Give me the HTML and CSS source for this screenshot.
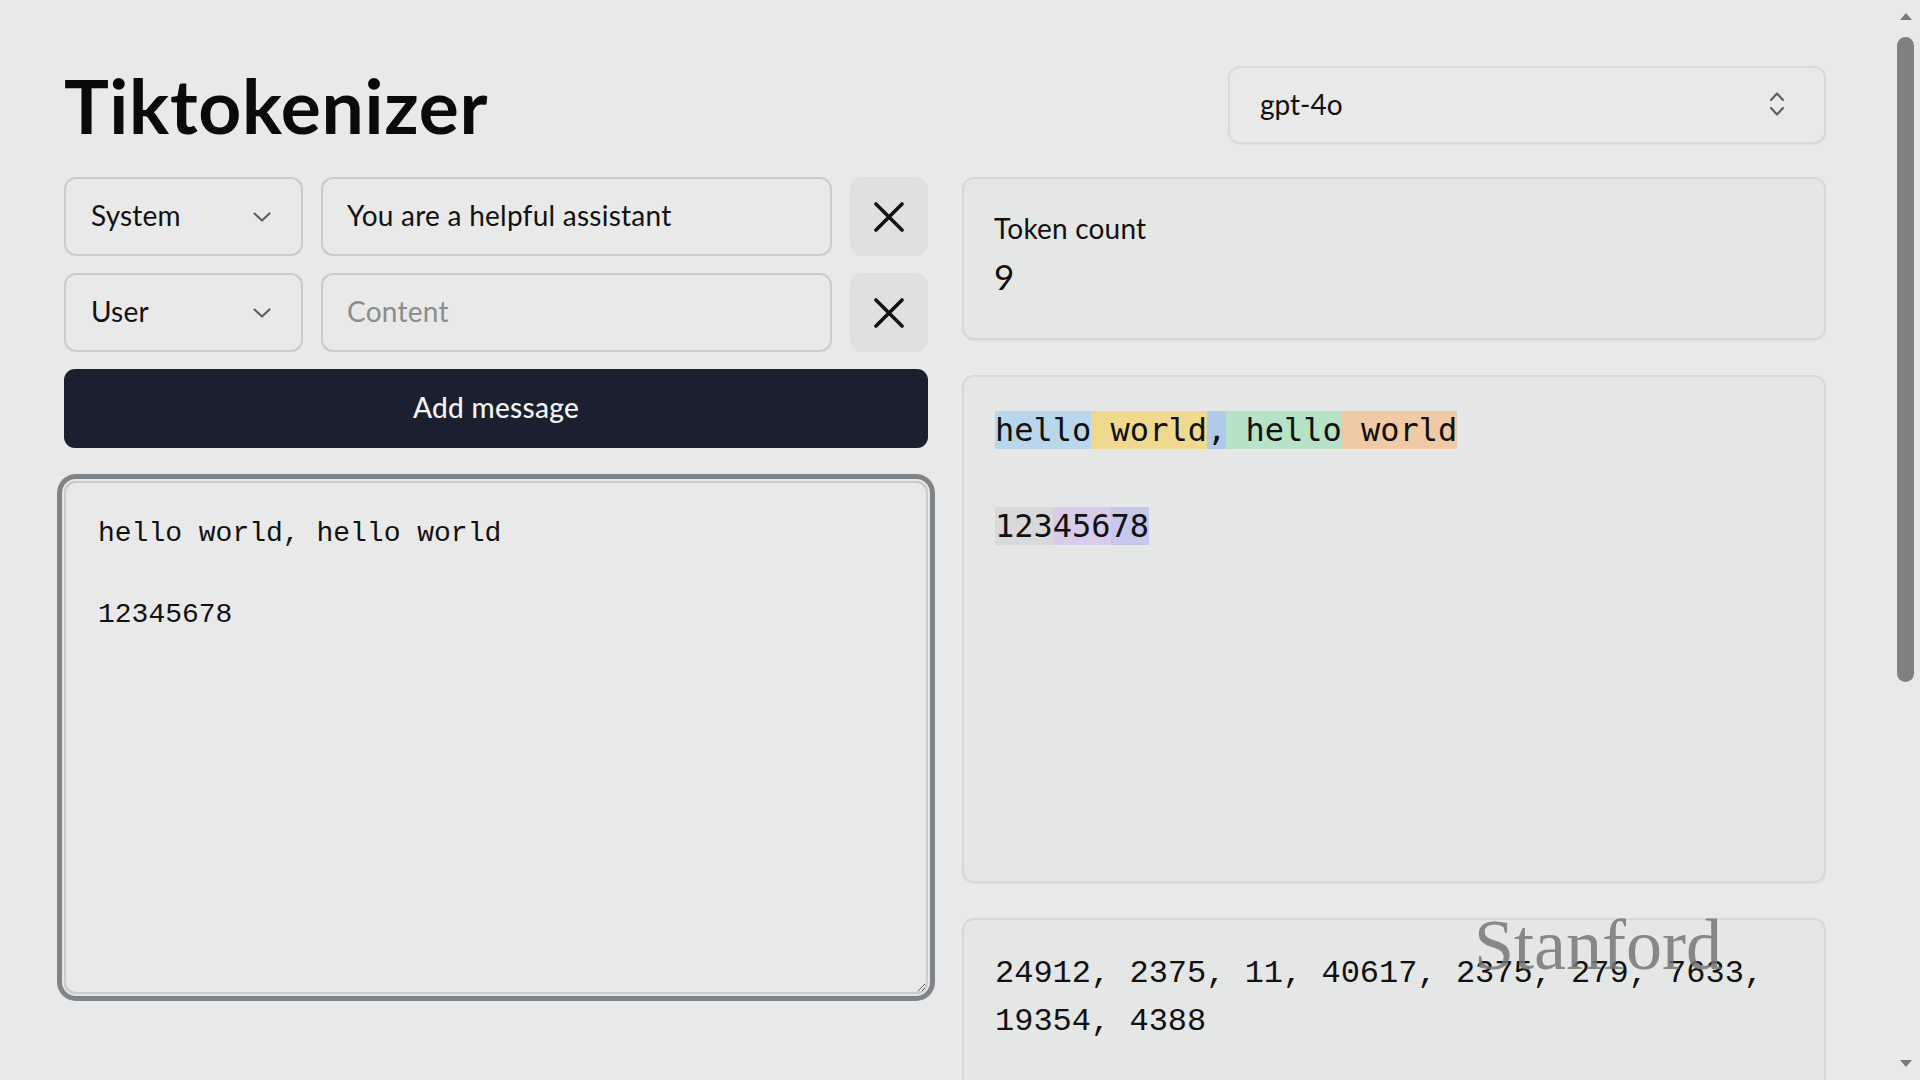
FILE: index.html
```
<!DOCTYPE html>
<html lang="en">
<head>
<meta charset="utf-8">
<title>Tiktokenizer</title>
<link rel="stylesheet" href="styles.css">
</head>
<body>
<div class="app">
  <main class="main">
    <header class="header">
      <h1 class="title">Tiktokenizer</h1>
      <div class="model-select">
        <span>gpt-4o</span>
        <svg class="updown" width="16" height="26" viewBox="0 0 16 26"><path d="M2 9 L8 2.5 L14 9" /><path d="M2 17 L8 23.5 L14 17" /></svg>
      </div>
    </header>
    <div class="grid">
      <section class="left">
        <div class="msg-row">
          <div class="role-select"><span>System</span><svg class="chev" width="18" height="10" viewBox="0 0 18 10"><path d="M1.5 1.5 L9 8.5 L16.5 1.5"/></svg></div>
          <input class="content-input" type="text" value="You are a helpful assistant">
          <button class="remove-btn" type="button"><svg width="30" height="30" viewBox="0 0 30 30"><path d="M2 2 L28 28 M28 2 L2 28"/></svg></button>
        </div>
        <div class="msg-row">
          <div class="role-select"><span>User</span><svg class="chev" width="18" height="10" viewBox="0 0 18 10"><path d="M1.5 1.5 L9 8.5 L16.5 1.5"/></svg></div>
          <input class="content-input" type="text" placeholder="Content">
          <button class="remove-btn" type="button"><svg width="30" height="30" viewBox="0 0 30 30"><path d="M2 2 L28 28 M28 2 L2 28"/></svg></button>
        </div>
        <button class="add-btn" type="button">Add message</button>
        <textarea class="encoder" id="encoder">hello world, hello world

12345678</textarea>
      </section>
      <section class="right">
        <div class="card count-card">
          <div class="count-label">Token count</div>
          <div class="count-value">9</div>
        </div>
        <div class="card tokens-card">
<pre class="tokens"><span class="t-sky">hello</span><span class="t-yellow"> world</span><span class="t-blue">,</span><span class="t-green"> hello</span><span class="t-orange"> world</span>

<span class="t-gray">123</span><span class="t-purple">456</span><span class="t-indigo">78</span></pre>
        </div>
        <div class="card ids-card">
          <p class="ids">24912, 2375, 11, 40617, 2375, 279, 7633, 19354, 4388</p>
        </div>
      </section>
    </div>
  </main>
  <div class="scrollbar">
    <div class="arrow-up"></div>
    <div class="thumb"></div>
    <div class="arrow-down"></div>
  </div>
  <div class="watermark">Stanford</div>
</div>
<script src="script.js"></script>
</body>
</html>
```
FILE: styles.css
```
html, body {
  margin: 0;
  height: 1080px;
  overflow: hidden;
  background: #e9e9e9;
}
body {
  font-family: Lato, "Noto Sans", sans-serif;
  color: #111;
}
.app {
  display: flex;
  height: 1080px;
  position: relative;
}
.main {
  flex: 1;
  padding: 66px 0 0 64px;
  box-sizing: border-box;
}
.header {
  width: 1762px;
  height: 78px;
  display: flex;
  align-items: center;
  justify-content: space-between;
}
.title {
  margin: 0;
  font-size: 75px;
  font-weight: 700;
  line-height: 78px;
  letter-spacing: 0.7px;
  color: #0a0a0a;
}
.model-select {
  width: 598px;
  height: 78px;
  box-sizing: border-box;
  border: 2px solid #d8d9da;
  border-radius: 12px;
  display: flex;
  align-items: center;
  justify-content: space-between;
  padding: 0 39px 2px 30px;
  font-size: 28px;
  box-shadow: 0 1px 2px rgba(0,0,0,0.04);
}
.updown path, .chev path {
  fill: none;
  stroke: #5a5a5a;
  stroke-width: 2;
  stroke-linecap: round;
  stroke-linejoin: round;
}
.grid {
  display: grid;
  grid-template-columns: 864px 864px;
  column-gap: 34px;
  margin-top: 33px;
  align-items: start;
}
.left {
  display: flex;
  flex-direction: column;
  gap: 17px;
}
.msg-row {
  display: flex;
  gap: 18px;
  height: 79px;
}
.role-select {
  width: 239px;
  box-sizing: border-box;
  border: 2px solid #cbcbcb;
  border-radius: 12px;
  display: flex;
  align-items: center;
  justify-content: space-between;
  padding: 0 30px 0 25px;
  font-size: 28px;
  letter-spacing: 0.2px;
}
.role-select span {
  margin-bottom: 4px;
}
.content-input {
  flex: 1;
  min-width: 0;
  box-sizing: border-box;
  border: 2px solid #cbcbcb;
  border-radius: 12px;
  background: transparent;
  padding: 0 24px 4px;
  font-family: Lato, "Noto Sans", sans-serif;
  font-size: 28px;
  letter-spacing: 0.25px;
  color: #111;
  outline: none;
}
.content-input::placeholder {
  color: #8c8c8c;
}
.remove-btn {
  width: 78px;
  height: 79px;
  flex: none;
  border: none;
  border-radius: 12px;
  background: #dee0e2;
  display: flex;
  align-items: center;
  justify-content: center;
  padding: 0;
}
.remove-btn path {
  fill: none;
  stroke: #111;
  stroke-width: 3.6;
  stroke-linecap: round;
}
.add-btn {
  height: 79px;
  border: none;
  border-radius: 11px;
  background: #1b2030;
  color: #f4f4f4;
  font-family: Lato, "Noto Sans", sans-serif;
  font-size: 28px;
  font-weight: 500;
  letter-spacing: 0.3px;
  padding: 0 0 3px;
}
.encoder {
  margin-top: 16px;
  height: 513px;
  box-sizing: border-box;
  border: 2px solid #c9ccd0;
  border-radius: 12px;
  padding: 31px 32px 30px;
  font-family: "Liberation Mono", monospace;
  font-size: 28px;
  line-height: 40.5px;
  background: transparent;
  color: #111;
  caret-color: #111;
  resize: vertical;
  outline: none;
  box-shadow: 0 0 0 2px #e6e6e6, 0 0 0 7px #7f8489;
}
.right {
  display: flex;
  flex-direction: column;
  gap: 35px;
}
.card {
  box-sizing: border-box;
  border: 2px solid #d6d8da;
  border-radius: 12px;
  background: #e5e6e6;
  box-shadow: 0 1px 2px rgba(0,0,0,0.04);
}
.count-card {
  height: 163px;
  padding: 28px 30px;
}
.count-label {
  font-size: 28px;
  line-height: 42px;
  letter-spacing: 0.2px;
}
.count-value {
  font-size: 35px;
  line-height: 49px;
  margin-top: 3px;
}
.tokens-card {
  height: 508px;
  padding: 29px 31px;
}
.tokens {
  margin: 0;
  font-family: "DejaVu Sans Mono", monospace;
  font-size: 32px;
  line-height: 48px;
  white-space: pre;
  color: #111;
}
.t-sky { background: #b9d7ea; }
.t-yellow { background: #efd98e; }
.t-blue { background: #b3c9ea; }
.t-green { background: #b6e2c6; }
.t-orange { background: #efcaa4; }
.t-gray { background: #d9d9db; }
.t-purple { background: #d9cbe9; }
.t-indigo { background: #c5c8ec; }
.ids-card {
  height: 300px;
  padding: 30px 31px;
}
.ids {
  margin: 0;
  font-family: "Liberation Mono", monospace;
  font-size: 32px;
  line-height: 48px;
  color: #111;
}
.scrollbar {
  width: 23px;
  flex: none;
  box-sizing: border-box;
  padding: 13px 6px 13px 0;
  display: flex;
  flex-direction: column;
  align-items: center;
}
.arrow-up {
  width: 0;
  height: 0;
  border-left: 6px solid transparent;
  border-right: 6px solid transparent;
  border-bottom: 7px solid #7a7a7a;
}
.thumb {
  margin-top: 17px;
  width: 17px;
  height: 645px;
  border-radius: 9px;
  background: #808080;
}
.arrow-down {
  margin-top: auto;
  width: 0;
  height: 0;
  border-left: 6px solid transparent;
  border-right: 6px solid transparent;
  border-top: 7px solid #7a7a7a;
}
.watermark {
  position: absolute;
  left: 1474px;
  top: 909px;
  font-family: "Liberation Serif", serif;
  font-size: 72px;
  line-height: 72px;
  color: rgba(118, 118, 118, 0.85);
  pointer-events: none;
}
```
FILE: script.js
```
var ta = document.getElementById('encoder');
if (ta) {
  ta.focus();
  var end = ta.value.length;
  ta.setSelectionRange(end, end);
}
```
